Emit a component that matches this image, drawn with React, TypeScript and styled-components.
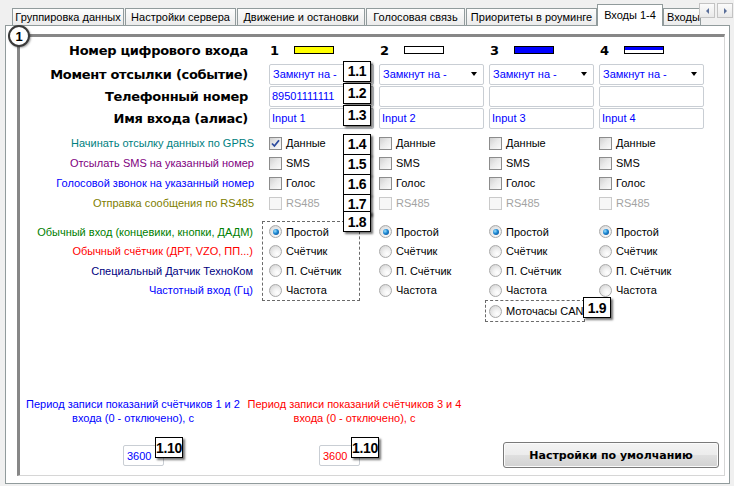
import React from 'react';
import styled, { createGlobalStyle, css } from 'styled-components';

const GlobalStyle = createGlobalStyle`
  html, body {
    margin: 0;
    padding: 0;
  }
  body {
    background: #f0f0f0;
    font-family: "Liberation Sans", Arial, sans-serif;
    font-size: 11px;
    color: #000;
  }
`;

const Window = styled.div`
  position: relative;
  width: 734px;
  height: 486px;
  overflow: hidden;
  background: #f0f0f0;
`;

/* ---------- tabs ---------- */

const TabStrip = styled.div`
  position: relative;
  display: flex;
  align-items: flex-end;
  height: 25px;
  padding-left: 12px;
`;

const Tab = styled.div<{ $w: number; $gap?: number; $active?: boolean; $cut?: boolean }>`
  box-sizing: border-box;
  flex: none;
  width: ${(p) => p.$w}px;
  height: ${(p) => (p.$active ? 21 : 17)}px;
  margin-left: ${(p) => p.$gap ?? 1}px;
  border: 1px solid #919b9c;
  border-bottom: none;
  background: ${(p) => (p.$active ? '#fff' : 'linear-gradient(#fdfdfd, #ebebeb)')};
  display: flex;
  align-items: center;
  justify-content: ${(p) => (p.$cut ? 'flex-start' : 'center')};
  padding-left: ${(p) => (p.$cut ? 3 : 0)}px;
  white-space: nowrap;
  ${(p) =>
    p.$active &&
    css`
      position: relative;
      z-index: 2;
      margin-bottom: -1px;
      height: 22px;
      padding-bottom: 2px;
    `}
`;

const Scroller = styled.div`
  position: absolute;
  right: 1px;
  top: 3px;
  display: flex;
  gap: 2px;
  z-index: 3;
`;

const ScrollBtn = styled.div<{ $dir: 'left' | 'right' }>`
  box-sizing: border-box;
  width: 16px;
  height: 15px;
  border: 1px solid #c3c3c3;
  background: linear-gradient(#fbfbfb, #e9e9e9);
  display: flex;
  align-items: center;
  justify-content: center;
  &::before {
    content: '';
    width: 0;
    height: 0;
    border-top: 3px solid transparent;
    border-bottom: 3px solid transparent;
    ${(p) =>
      p.$dir === 'left'
        ? 'border-right: 3px solid #5a6f9a;'
        : 'border-left: 3px solid #5a6f9a;'}
  }
`;

/* ---------- panel and group frame ---------- */

const Panel = styled.div`
  box-sizing: border-box;
  position: relative;
  z-index: 1;
  width: 725px;
  height: 459px;
  margin-left: 5px;
  border: 1px solid #919b9c;
  background: #fff;
  padding: 8px 0 0 11px;
`;

const Frame = styled.div`
  box-sizing: border-box;
  position: relative;
  width: 708px;
  height: 442px;
  border-top: 3px solid #878787;
  border-left: 3px solid #878787;
  border-right: 1px solid #d6d6d6;
  border-bottom: 1px solid #d6d6d6;
  display: flex;
  flex-direction: column;
`;

const Badge = styled.div`
  position: absolute;
  left: -12px;
  top: -12px;
  box-sizing: border-box;
  width: 22px;
  height: 22px;
  border-radius: 50%;
  border: 2px solid #3a3a3a;
  background: #fff;
  box-shadow: 1px 1px 2px rgba(0, 0, 0, 0.35);
  display: flex;
  align-items: center;
  justify-content: center;
  font: bold 13px "Liberation Sans", Arial, sans-serif;
`;

/* ---------- form rows ---------- */

const Row = styled.div<{ $h: number; $mt?: number }>`
  display: grid;
  grid-template-columns: 249px repeat(4, 110px);
  height: ${(p) => p.$h}px;
  margin-top: ${(p) => p.$mt ?? 0}px;
  align-items: center;
`;

const BoldLabel = styled.div`
  text-align: right;
  padding-right: 21px;
  font: bold 13px "DejaVu Sans", sans-serif;
  letter-spacing: -0.3px;
  white-space: nowrap;
`;

const Label = styled.div<{ $color: string }>`
  text-align: right;
  padding-right: 15px;
  color: ${(p) => p.$color};
  white-space: nowrap;
`;

const Cell = styled.div`
  position: relative;
  display: flex;
  align-items: center;
`;

const HeadCell = styled.div`
  display: flex;
  align-items: center;
  padding-left: 1px;
  font: bold 13px "DejaVu Sans", sans-serif;
`;

const ColNum = styled.span`
  width: 24px;
`;

const Swatch = styled.span<{ $fill: string }>`
  box-sizing: border-box;
  width: 40px;
  height: 8px;
  border: 1px solid #000;
  background: ${(p) => p.$fill};
`;

const Field = styled.div<{ $w?: number; $color?: string }>`
  box-sizing: border-box;
  width: ${(p) => p.$w ?? 105}px;
  height: 21px;
  border: 1px solid #c9ced4;
  border-radius: 2px;
  background: #fff;
  display: flex;
  align-items: center;
  padding: 0 6px 0 2px;
  color: ${(p) => p.$color ?? '#0000ff'};
  white-space: nowrap;
  overflow: hidden;
`;

const SelectText = styled.span`
  flex: 1;
  padding-left: 1px;
`;

const Arrow = styled.span`
  width: 0;
  height: 0;
  border-left: 3.5px solid transparent;
  border-right: 3.5px solid transparent;
  border-top: 4px solid #000;
`;

const Tag = styled.span<{ $top?: number; $left?: number }>`
  position: absolute;
  top: ${(p) => p.$top ?? -3}px;
  left: ${(p) => p.$left ?? 74}px;
  z-index: 2;
  box-sizing: border-box;
  width: 28px;
  height: 21px;
  border: 1px solid #000;
  background: #fff;
  box-shadow: 2px 2px 2px rgba(0, 0, 0, 0.55);
  display: flex;
  align-items: center;
  justify-content: center;
  color: #000;
  font: bold 14px "Liberation Sans", Arial, sans-serif;
  letter-spacing: -0.3px;
`;

/* ---------- checkboxes ---------- */

const CheckItem = styled.span<{ $disabled?: boolean }>`
  display: flex;
  align-items: center;
  gap: 4px;
  color: ${(p) => (p.$disabled ? '#a3a3a3' : '#000')};
`;

const CheckBox = styled.span<{ $disabled?: boolean }>`
  box-sizing: border-box;
  width: 13px;
  height: 13px;
  border: 1px solid ${(p) => (p.$disabled ? '#cacaca' : '#8c8c8c')};
  background: ${(p) =>
    p.$disabled ? '#f7f7f7' : 'linear-gradient(135deg, #cfcfcf 0%, #e9e9e9 45%, #fbfbfb 100%)'};
  display: flex;
  align-items: center;
  justify-content: center;
`;

/* ---------- radios ---------- */

const RadioSection = styled.div`
  display: grid;
  grid-template-columns: 249px repeat(4, 110px);
  margin-top: 8px;
  align-items: start;
`;

const RadioLabels = styled.div`
  display: flex;
  flex-direction: column;
  padding-top: 1px;
`;

const Line = styled.div`
  height: 19.5px;
  display: flex;
  align-items: center;
`;

const LabelLine = styled(Line)<{ $color: string }>`
  justify-content: flex-end;
  padding-right: 16px;
  color: ${(p) => p.$color};
  white-space: nowrap;
`;

const RadioGroup = styled.div<{ $boxed?: boolean }>`
  position: relative;
  display: flex;
  flex-direction: column;
  padding-top: 1px;
  ${(p) =>
    p.$boxed &&
    css`
      box-sizing: border-box;
      width: 98px;
      margin-left: -7px;
      padding: 0 0 0 6px;
      border: 1px dashed #6a6a6a;
    `}
`;

const RadioItem = styled.span`
  display: flex;
  align-items: center;
  gap: 4px;
  white-space: nowrap;
`;

const RadioDot = styled.span<{ $on?: boolean }>`
  position: relative;
  box-sizing: border-box;
  width: 13px;
  height: 13px;
  border-radius: 50%;
  border: 1px solid #a9a9a9;
  background: radial-gradient(circle at 65% 70%, #ffffff 0%, #f2f2f2 35%, #cdcdcd 100%);
  ${(p) =>
    p.$on &&
    css`
      &::after {
        content: '';
        position: absolute;
        left: 2.5px;
        top: 2.5px;
        width: 6px;
        height: 6px;
        border-radius: 50%;
        background: radial-gradient(circle at 35% 35%, #9be0ff 0%, #1b86d0 45%, #0b3f86 100%);
      }
    `}
`;

const ExtraBox = styled.div`
  position: relative;
  box-sizing: border-box;
  width: 100px;
  height: 22px;
  margin-left: -4px;
  padding-left: 3px;
  border: 1px dashed #6a6a6a;
  display: flex;
  align-items: center;
`;

/* ---------- bottom ---------- */

const Bottom = styled.div`
  margin-top: auto;
  display: flex;
  align-items: flex-end;
  padding-bottom: 7px;
`;

const Period = styled.div<{ $w: number; $color: string }>`
  width: ${(p) => p.$w}px;
  color: ${(p) => p.$color};
  display: flex;
  flex-direction: column;
  margin-bottom: 2px;
`;

const PeriodText = styled.div`
  text-align: center;
  line-height: 14px;
  white-space: nowrap;
`;

const NumberBox = styled(Field)<{ $ml: number }>`
  position: relative;
  overflow: visible;
  margin-left: ${(p) => p.$ml}px;
  margin-top: 20px;
  padding-left: 3px;
`;

const Button = styled.button`
  box-sizing: border-box;
  width: 216px;
  height: 26px;
  margin-left: auto;
  margin-right: 5px;
  border: 1px solid #7a7a7a;
  border-radius: 3px;
  background: linear-gradient(#f4f4f4 0%, #ececec 48%, #dfdfdf 52%, #d2d2d2 100%);
  box-shadow: inset 0 0 0 1px #fbfbfb;
  font: bold 11px "DejaVu Sans", sans-serif;
  color: #000;
  padding: 0;
`;

/* ---------- data ---------- */

const tabs = [
  { t: 'Группировка данных', w: 112, gap: 0 },
  { t: 'Настройки сервера', w: 111 },
  { t: 'Движение и остановки', w: 128 },
  { t: 'Голосовая связь', w: 99 },
  { t: 'Приоритеты в роуминге', w: 131 },
  { t: 'Входы 1-4', w: 66, gap: 0, active: true },
  { t: 'Входы', w: 38, gap: 0, cut: true },
];

const swatches = ['#ffff00', '#ffffff', '#0000ff', 'linear-gradient(#0000ff 50%, #ffffff 50%)'];
const phones = ['89501111111', '', '', ''];
const cols = [0, 1, 2, 3];

const checks = [
  { tag: '1.4', label: 'Начинать отсылку данных по GPRS', color: '#008080', text: 'Данные' },
  { tag: '1.5', label: 'Отсылать SMS на указанный номер', color: '#800080', text: 'SMS' },
  { tag: '1.6', label: 'Голосовой звонок на указанный номер', color: '#0000ff', text: 'Голос' },
  { tag: '1.7', label: 'Отправка сообщения по RS485', color: '#808000', text: 'RS485', disabled: true },
];

const radioLabels = [
  { label: 'Обычный вход (концевики, кнопки, ДАДМ)', color: '#008000' },
  { label: 'Обычный счётчик (ДРТ, VZO, ПП...)', color: '#ff0000' },
  { label: 'Специальный Датчик ТехноКом', color: '#000080' },
  { label: 'Частотный вход (Гц)', color: '#0000ff' },
];
const radioItems = ['Простой', 'Счётчик', 'П. Счётчик', 'Частота'];

function Check({ text, checked, disabled }: { text: string; checked?: boolean; disabled?: boolean }) {
  return (
    <CheckItem $disabled={disabled}>
      <CheckBox $disabled={disabled}>
        {checked && (
          <svg width="9" height="9" viewBox="0 0 9 9">
            <path d="M1 4.5 L3.4 7 L8 1.2" fill="none" stroke="#2c4b9e" strokeWidth="1.8" />
          </svg>
        )}
      </CheckBox>
      {text}
    </CheckItem>
  );
}

function Radios({ boxed, extra, tag }: { boxed?: boolean; extra?: boolean; tag?: string }) {
  return (
    <div>
      <RadioGroup $boxed={boxed}>
        {radioItems.map((r, i) => (
          <Line key={r}>
            <RadioItem>
              <RadioDot $on={i === 0} />
              {r}
            </RadioItem>
          </Line>
        ))}
        {tag && (
          <Tag $top={-11} $left={80}>
            {tag}
          </Tag>
        )}
      </RadioGroup>
      {extra && (
        <ExtraBox>
          <RadioItem>
            <RadioDot />
            Моточасы CAN
          </RadioItem>
          <Tag $top={-4} $left={97}>
            1.9
          </Tag>
        </ExtraBox>
      )}
    </div>
  );
}

export default function App() {
  return (
    <Window>
      <GlobalStyle />
      <TabStrip>
        {tabs.map((t) => (
          <Tab key={t.t} $w={t.w} $gap={t.gap} $active={t.active} $cut={t.cut}>
            {t.t}
          </Tab>
        ))}
        <Scroller>
          <ScrollBtn $dir="left" />
          <ScrollBtn $dir="right" />
        </Scroller>
      </TabStrip>

      <Panel>
        <Frame>
          <Badge>1</Badge>

          <Row $h={26}>
            <BoldLabel>Номер цифрового входа</BoldLabel>
            {cols.map((c) => (
              <HeadCell key={c}>
                <ColNum>{c + 1}</ColNum>
                <Swatch $fill={swatches[c]} />
              </HeadCell>
            ))}
          </Row>

          <Row $h={22}>
            <BoldLabel>Момент отсылки (событие)</BoldLabel>
            {cols.map((c) => (
              <Cell key={c}>
                <Field>
                  <SelectText>Замкнут на -</SelectText>
                  <Arrow />
                </Field>
                {c === 0 && <Tag>1.1</Tag>}
              </Cell>
            ))}
          </Row>

          <Row $h={22}>
            <BoldLabel>Телефонный номер</BoldLabel>
            {cols.map((c) => (
              <Cell key={c}>
                <Field>{phones[c]}</Field>
                {c === 0 && <Tag>1.2</Tag>}
              </Cell>
            ))}
          </Row>

          <Row $h={22}>
            <BoldLabel>Имя входа (алиас)</BoldLabel>
            {cols.map((c) => (
              <Cell key={c}>
                <Field>Input {c + 1}</Field>
                {c === 0 && <Tag>1.3</Tag>}
              </Cell>
            ))}
          </Row>

          {checks.map((ch, i) => (
            <Row key={ch.tag} $h={20} $mt={i === 0 ? 4 : 0}>
              <Label $color={ch.color}>{ch.label}</Label>
              {cols.map((c) => (
                <Cell key={c}>
                  <Check text={ch.text} checked={i === 0 && c === 0} disabled={ch.disabled} />
                  {c === 0 && <Tag>{ch.tag}</Tag>}
                </Cell>
              ))}
            </Row>
          ))}

          <RadioSection>
            <RadioLabels>
              {radioLabels.map((r) => (
                <LabelLine key={r.label} $color={r.color}>
                  {r.label}
                </LabelLine>
              ))}
            </RadioLabels>
            <Radios boxed tag="1.8" />
            <Radios />
            <Radios extra />
            <Radios />
          </RadioSection>

          <Bottom>
            <Period $w={226} $color="#0000ff">
              <PeriodText>
                Период записи показаний счётчиков 1 и 2
                <br />
                входа (0 - отключено), с
              </PeriodText>
              <NumberBox $w={41} $ml={103} $color="#0000ff">
                3600
                <Tag $top={-9} $left={31}>
                  1.10
                </Tag>
              </NumberBox>
            </Period>
            <Period $w={217} $color="#ff0000">
              <PeriodText>
                Период записи показаний счётчиков 3 и 4
                <br />
                входа (0 - отключено), с
              </PeriodText>
              <NumberBox $w={41} $ml={73} $color="#ff0000">
                3600
                <Tag $top={-9} $left={31}>
                  1.10
                </Tag>
              </NumberBox>
            </Period>
            <Button>Настройки по умолчанию</Button>
          </Bottom>
        </Frame>
      </Panel>
    </Window>
  );
}
